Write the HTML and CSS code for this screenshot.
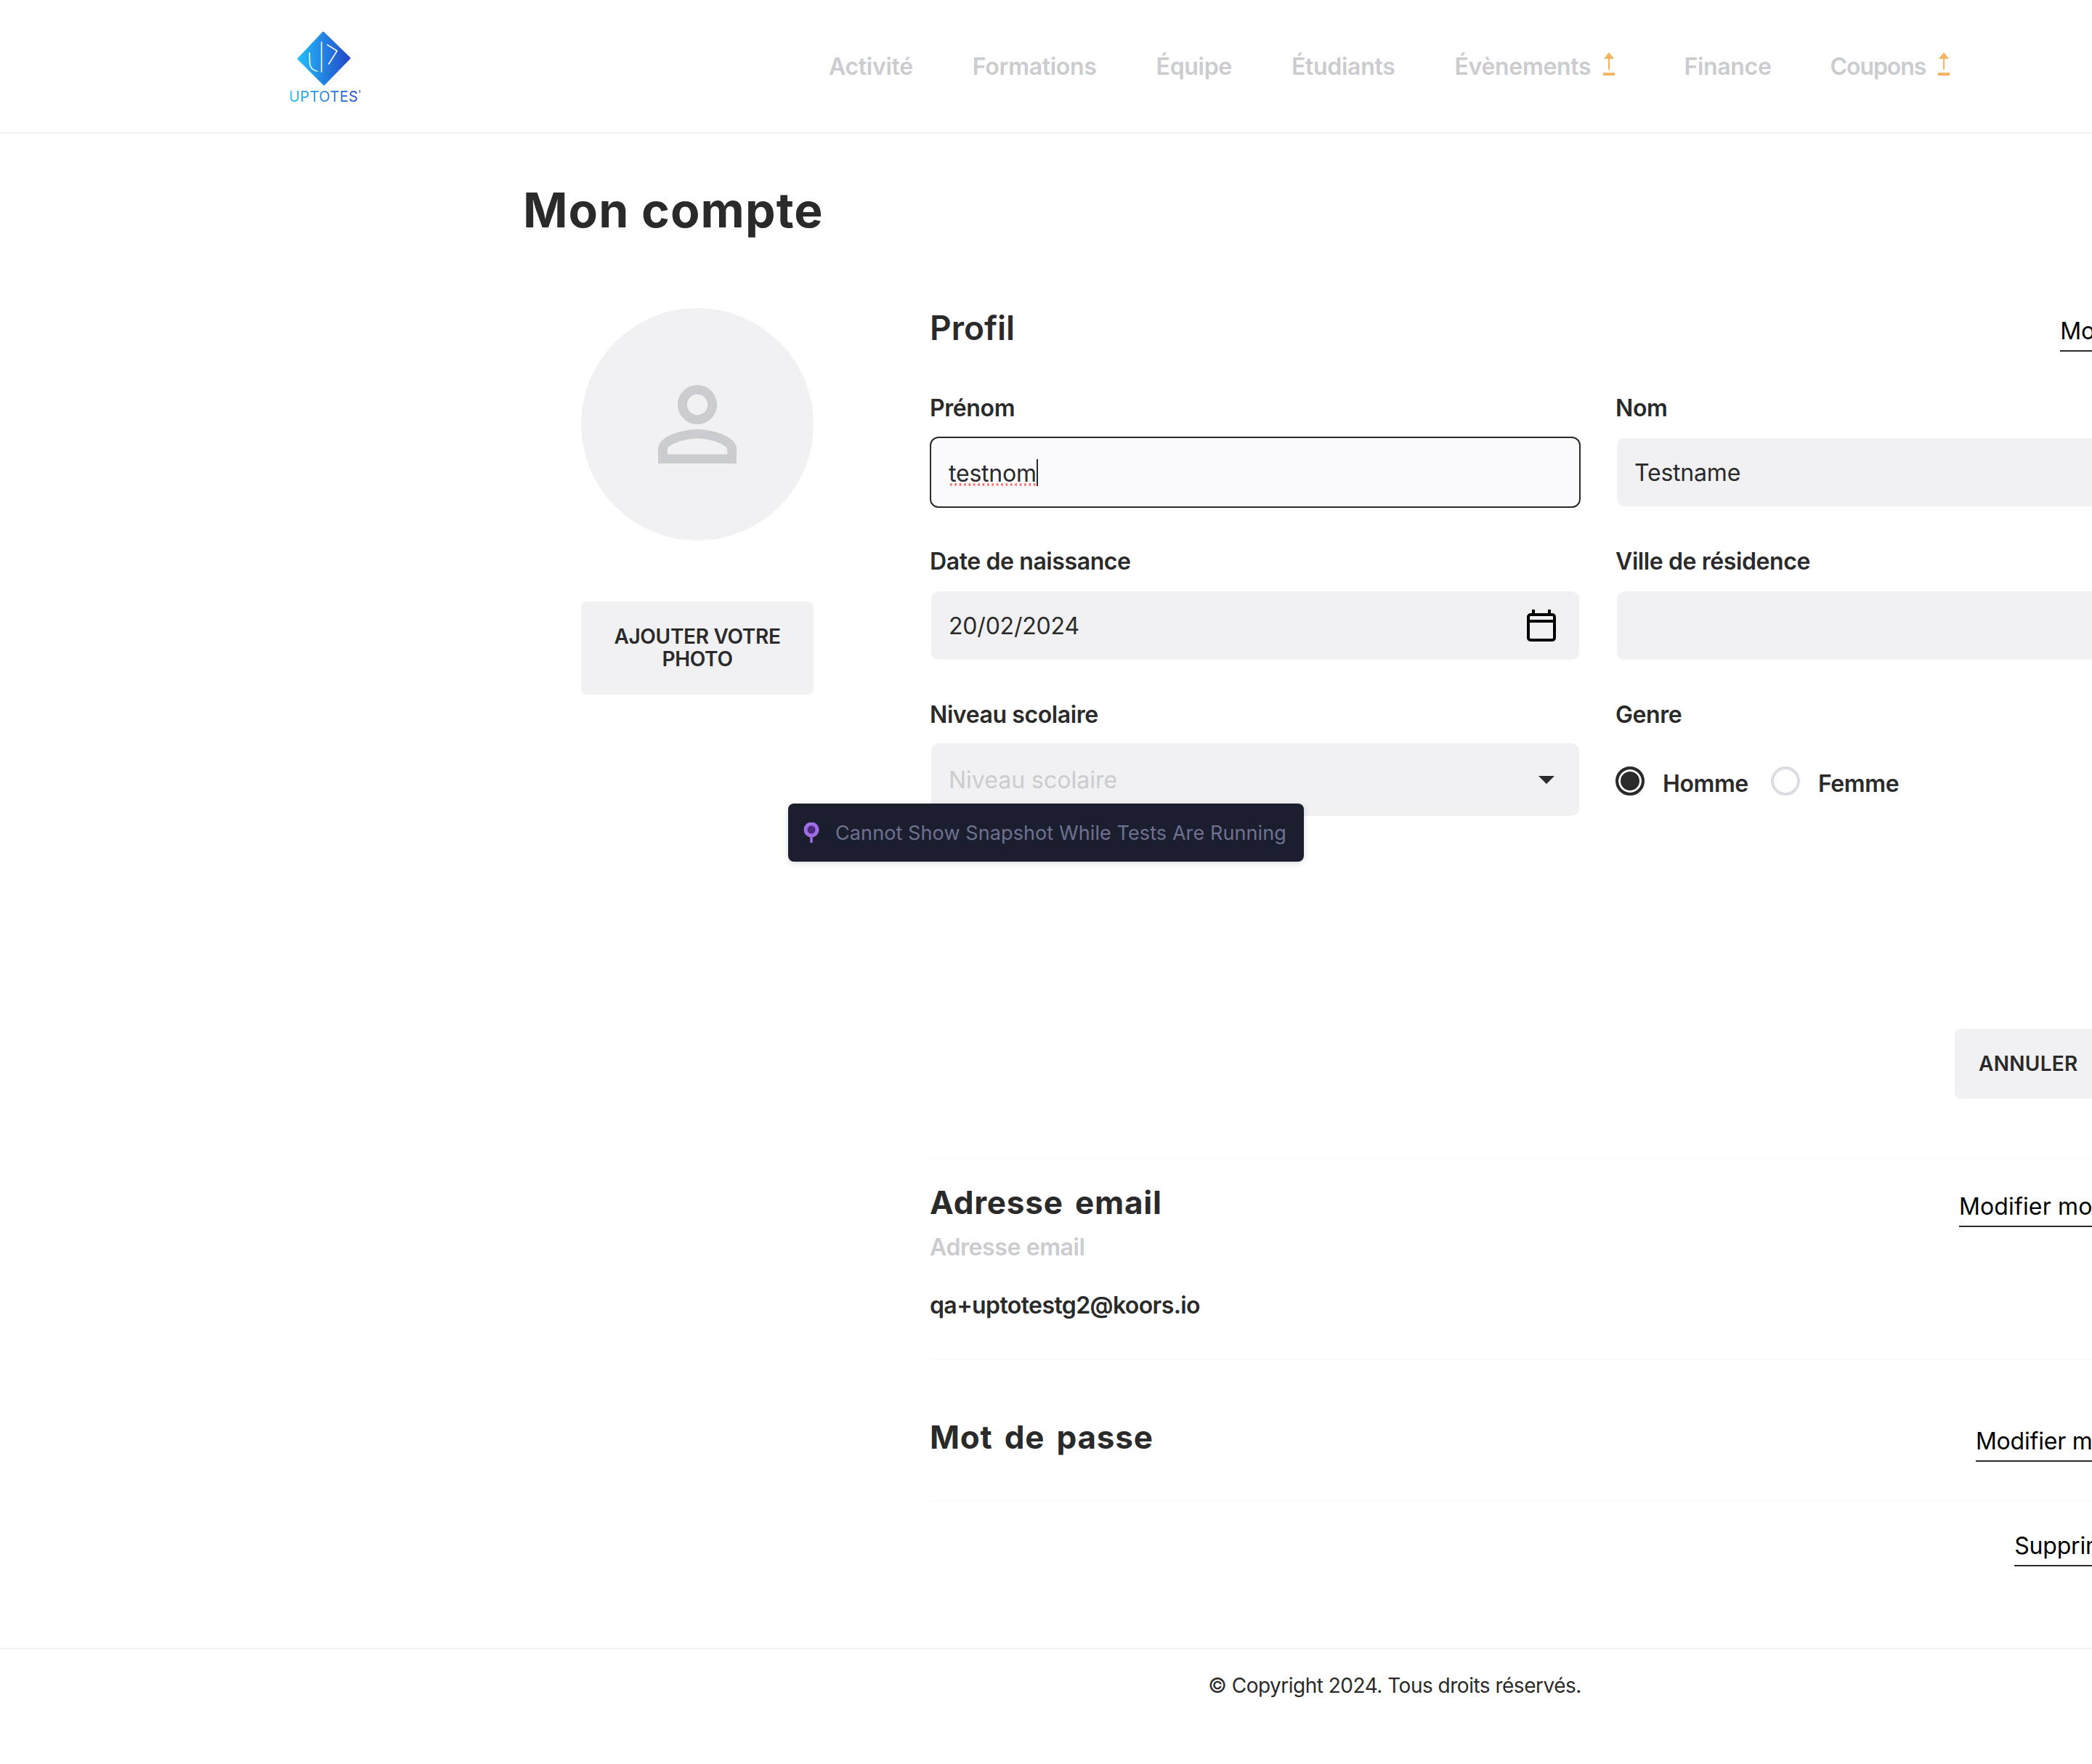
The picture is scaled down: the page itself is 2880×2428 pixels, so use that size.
FILE: index.html
```html
<!DOCTYPE html>
<html lang="fr">
  <head>
    <meta charset="UTF-8" />
    <title>Mon compte</title>
    <link rel="stylesheet" href="styles.css">
  </head>
  <body>
    <div class="page">
      <header class="topbar">
        <a class="logo" href="#">
          <svg class="logo-mark" width="76" height="77" viewBox="0 0 76 77">
            <defs>
              <linearGradient id="logoGrad" x1="0" y1="0" x2="1" y2="0">
                <stop offset="0" stop-color="#22bdf8" />
                <stop offset="1" stop-color="#2448c9" />
              </linearGradient>
            </defs>
            <path d="M37 3 L73 38 L38 74 L3 39 Z" fill="url(#logoGrad)" stroke="url(#logoGrad)" stroke-width="3" stroke-linejoin="round" />
            <g fill="none" stroke="#fff" stroke-width="1.6" stroke-linecap="round" stroke-linejoin="round">
              <path d="M18 31 L18.6 46 Q19.5 54 28.6 56" />
              <path d="M34.6 16 V57" />
              <path d="M42.6 19.6 L56 28 L44.6 46" />
            </g>
          </svg>
          <span class="logo-text">UPTOTES</span>
        </a>
        <nav class="nav">
          <a href="#">Activité</a>
          <a href="#">Formations</a>
          <a href="#">Équipe</a>
          <a href="#">Étudiants</a>
          <a href="#">Évènements<svg class="nav-flag" width="16" height="32" viewBox="0 0 16 32"><path d="M8 0 L15 9 H9 V24 H7 V9 H1 Z" /><rect x="0" y="28" width="16" height="4" /></svg></a>
          <a href="#">Finance</a>
          <a class="nav-coupons" href="#">Coupons<svg class="nav-flag" width="16" height="32" viewBox="0 0 16 32"><path d="M8 0 L15 9 H9 V24 H7 V9 H1 Z" /><rect x="0" y="28" width="16" height="4" /></svg></a>
        </nav>
      </header>

      <main class="content">
        <h1>Mon compte</h1>

        <div class="account">
          <aside class="photo">
            <div class="avatar">
              <svg width="162" height="162" viewBox="0 0 24 24" fill="#cbccd0">
                <path d="M12 5.9c1.16 0 2.1.94 2.1 2.1s-.94 2.1-2.1 2.1S9.9 9.16 9.9 8s.94-2.1 2.1-2.1m0 9c2.97 0 6.1 1.46 6.1 2.1v1.1H5.9V17c0-.64 3.13-2.1 6.1-2.1M12 4C9.79 4 8 5.79 8 8s1.79 4 4 4 4-1.79 4-4-1.79-4-4-4zm0 9c-2.67 0-8 1.34-8 4v3h16v-3c0-2.66-5.33-4-8-4z" />
              </svg>
            </div>
            <button class="btn btn-photo">AJOUTER VOTRE PHOTO</button>
          </aside>

          <div class="details">
            <section class="profile">
              <div class="section-head">
                <h2 class="profile-title">Profil</h2>
                <a class="link link-profile" href="#">Modifier mon profil</a>
              </div>

              <div class="form-grid">
                <div class="field">
                  <label>Prénom</label>
                  <div class="control control-focus"><span class="typo">testnom</span><span class="caret"></span></div>
                </div>
                <div class="field">
                  <label>Nom</label>
                  <div class="control">Testname</div>
                </div>
                <div class="field">
                  <label>Date de naissance</label>
                  <div class="control">
                    20/02/2024
                    <svg class="control-icon" width="40" height="44" viewBox="0 0 40 44" fill="none" stroke="#000" stroke-width="4">
                      <rect x="2" y="7" width="36" height="35" rx="3" />
                      <path d="M2 16 H38 M9 0 V8 M31 0 V8" />
                    </svg>
                  </div>
                </div>
                <div class="field">
                  <label>Ville de résidence</label>
                  <div class="control"></div>
                </div>
                <div class="field">
                  <label>Niveau scolaire</label>
                  <div class="control control-select">
                    Niveau scolaire
                    <span class="select-arrow"></span>
                  </div>
                </div>
                <div class="field">
                  <label>Genre</label>
                  <div class="radios">
                    <span class="radio radio-on"></span><span class="radio-label">Homme</span>
                    <span class="radio"></span><span class="radio-label">Femme</span>
                  </div>
                </div>
              </div>

              <div class="actions">
                <button class="btn btn-cancel">ANNULER</button>
                <button class="btn btn-save">VALIDER</button>
              </div>
            </section>

            <section class="block block-email">
              <div class="section-head">
                <h2>Adresse email</h2>
                <a class="link link-email" href="#">Modifier mon adresse email</a>
              </div>
              <p class="hint">Adresse email</p>
              <p class="email">qa+uptotestg2@koors.io</p>
            </section>

            <section class="block block-password">
              <div class="section-head">
                <h2>Mot de passe</h2>
                <a class="link link-password" href="#">Modifier mon mot de passe</a>
              </div>
            </section>

            <div class="delete-row">
              <a class="link link-delete" href="#">Supprimer mon compte</a>
            </div>
          </div>
        </div>
      </main>

      <footer class="footer">© Copyright 2024. Tous droits réservés.</footer>
    </div>

    <div class="snapshot-toast">
      <svg width="22" height="28" viewBox="0 0 22 28">
        <circle cx="11" cy="10" r="8" fill="#4c2a80" stroke="#a06ce4" stroke-width="5" />
        <path d="M11 18 V28" stroke="#a06ce4" stroke-width="3.5" />
      </svg>
      Cannot Show Snapshot While Tests Are Running
    </div>
  </body>
</html>
```

FILE: styles.css
```css
html,
body {
  margin: 0;
  padding: 0;
  height: 2428px;
  overflow: hidden;
  background: #fff;
}

body {
  font-family: Inter, "Liberation Sans", sans-serif;
  font-size: 32px;
  color: #2a2a2a;
}

a {
  text-decoration: none;
  color: inherit;
}

.page {
  width: 3840px;
}

/* header */
.topbar {
  height: 182px;
  border-bottom: 2px solid #f4f4f5;
  display: flex;
}

.logo {
  margin-left: 399px;
  padding-top: 42px;
  width: 98px;
  display: flex;
  flex-direction: column;
  align-items: center;
}

.logo-mark {
  margin-right: 5px;
}

.logo-text {
  font-size: 20px;
  line-height: 22px;
  margin-top: 0;
  letter-spacing: 0.4px;
  white-space: nowrap;
  background: linear-gradient(90deg, #22bdf8, #2448c9);
  -webkit-background-clip: text;
  background-clip: text;
  color: transparent;
}

.logo-text::after {
  content: "'";
  font-size: 14px;
  vertical-align: 5px;
}

.nav {
  margin-left: 644px;
  height: 182px;
  display: flex;
  align-items: center;
  gap: 82px;
  font-weight: 600;
  letter-spacing: -0.3px;
  color: #cbccd0;
  white-space: nowrap;
}

.nav a {
  display: flex;
  align-items: center;
}

.nav .nav-coupons {
  letter-spacing: -1.1px;
  margin-left: -1px;
}

.nav-flag {
  margin-left: 17px;
  margin-right: 13px;
  margin-top: -6px;
  fill: #f5b45f;
}

/* main */
.content {
  width: 2400px;
  margin: 0 auto;
}

h1 {
  margin: 0;
  padding-top: 60px;
  height: 176px;
  box-sizing: border-box;
  font-size: 66px;
  letter-spacing: 1.1px;
  line-height: 90px;
  font-weight: 700;
  color: #2a2a2a;
}

h2 {
  margin: 0;
  font-size: 44px;
  letter-spacing: 0.8px;
  word-spacing: 5px;
  line-height: 60px;
  font-weight: 700;
}

.account {
  margin-top: 64px;
  display: flex;
}

.photo {
  width: 560px;
  padding-left: 80px;
  box-sizing: border-box;
}

.avatar {
  width: 320px;
  height: 320px;
  border-radius: 50%;
  background: #f1f1f3;
  display: flex;
  align-items: center;
  justify-content: center;
}

.btn {
  border: none;
  border-radius: 8px;
  background: #f1f1f3;
  font-family: inherit;
  font-size: 28px;
  letter-spacing: 0.3px;
  font-weight: 600;
  color: #2a2a2a;
}

.btn-photo {
  margin-top: 84px;
  width: 320px;
  height: 128px;
  padding: 0 30px;
  letter-spacing: -0.3px;
  line-height: 31px;
}

.details {
  width: 1840px;
  flex-shrink: 0;
}

.section-head {
  display: flex;
  justify-content: space-between;
  align-items: flex-start;
}

.profile-title {
  font-size: 46px;
  letter-spacing: 0;
  line-height: 44px;
  font-weight: 600;
  margin-top: 5px;
}

.link {
  color: #000;
  line-height: 44px;
  margin-top: 14px;
  padding-bottom: 4px;
  border-bottom: 2px solid #2a2a2a;
  white-space: nowrap;
  letter-spacing: -0.2px;
}

.link-profile {
  margin-top: 10px;
}

.link-email {
  letter-spacing: 0.15px;
}

.link-password {
  margin-right: -9px;
}

.link-delete {
  margin-top: 1px;
  margin-right: -5px;
}

.form-grid {
  margin-top: 58px;
  display: grid;
  grid-template-columns: 896px 896px;
  column-gap: 48px;
  row-gap: 54px;
}

.field label {
  display: block;
  font-weight: 600;
  letter-spacing: -0.4px;
  line-height: 40px;
  margin-bottom: 19px;
}

.control {
  box-sizing: border-box;
  height: 98px;
  padding: 0 24px;
  border: 2px solid transparent;
  border-radius: 12px;
  background: #f1f1f3;
  background-clip: padding-box;
  letter-spacing: -0.2px;
  display: flex;
  align-items: center;
  justify-content: space-between;
}

.control-focus {
  border-color: #2a2a2a;
  background: #fbfbfd;
  justify-content: flex-start;
}

.typo {
  padding-top: 2px;
  background: radial-gradient(circle, #ff6b6b 1.6px, transparent 1.9px) left calc(100% - 2px) / 6.4px 4px repeat-x;
}

.caret {
  width: 2px;
  height: 37px;
  background: #2a2a2a;
}

.control-icon {
  margin-right: 8px;
}

.control-select {
  height: 104px;
  margin-top: -2px;
  letter-spacing: 0;
  color: #cbccd0;
}

.select-arrow {
  width: 0;
  height: 0;
  margin-right: 10px;
  border-left: 11px solid transparent;
  border-right: 11px solid transparent;
  border-top: 11px solid #2a2a2a;
}

.radios {
  display: flex;
  align-items: center;
  font-weight: 600;
  letter-spacing: -0.4px;
  margin-top: 47px;
}

.radio {
  width: 40px;
  height: 40px;
  box-sizing: border-box;
  border: 4px solid #dcdde2;
  border-radius: 50%;
}

.radio-on {
  border-color: #2a2a2a;
  background: #2a2a2a;
  box-shadow: inset 0 0 0 3px #fff;
}

.radio-label {
  margin-left: 25px;
  margin-right: 31px;
  padding-top: 8px;
}

.actions {
  margin-top: 291px;
  display: flex;
  justify-content: flex-end;
  gap: 24px;
}

.btn-cancel,
.btn-save {
  height: 96px;
  padding: 0 33px;
}

.btn-cancel {
  width: 202px;
}

.btn-save {
  width: 203px;
}

.profile {
  padding-bottom: 82px;
  border-bottom: 2px solid #fbfbfb;
}

.block {
  box-sizing: border-box;
  border-bottom: 2px solid #fbfbfb;
}

.block-email {
  padding-top: 29px;
  height: 276px;
}

.hint {
  margin: 8px 0 0;
  font-weight: 600;
  letter-spacing: -0.4px;
  line-height: 40px;
  color: #cbccd0;
}

.email {
  margin: 40px 0 0;
  font-weight: 600;
  letter-spacing: -0.6px;
  line-height: 40px;
}

.block-password {
  padding-top: 76px;
  height: 195px;
}

.delete-row {
  margin-top: 38px;
  display: flex;
  justify-content: flex-end;
}

.footer {
  margin-top: 112px;
  height: 120px;
  border-top: 2px solid #f1f1f3;
  padding-top: 32px;
  box-sizing: border-box;
  text-align: center;
  font-size: 28px;
  letter-spacing: -0.5px;
  line-height: 36px;
}

/* tooltip left over the form */
.snapshot-toast {
  position: absolute;
  left: 1085px;
  top: 1106px;
  width: 710px;
  height: 80px;
  box-sizing: border-box;
  padding-left: 21px;
  border-radius: 8px;
  background: #1b1e2e;
  box-shadow: 0 2px 8px rgba(0, 0, 0, 0.15);
  display: flex;
  align-items: center;
  gap: 22px;
  font-size: 27px;
  letter-spacing: 0.1px;
  color: #6f7190;
  white-space: nowrap;
}
```
